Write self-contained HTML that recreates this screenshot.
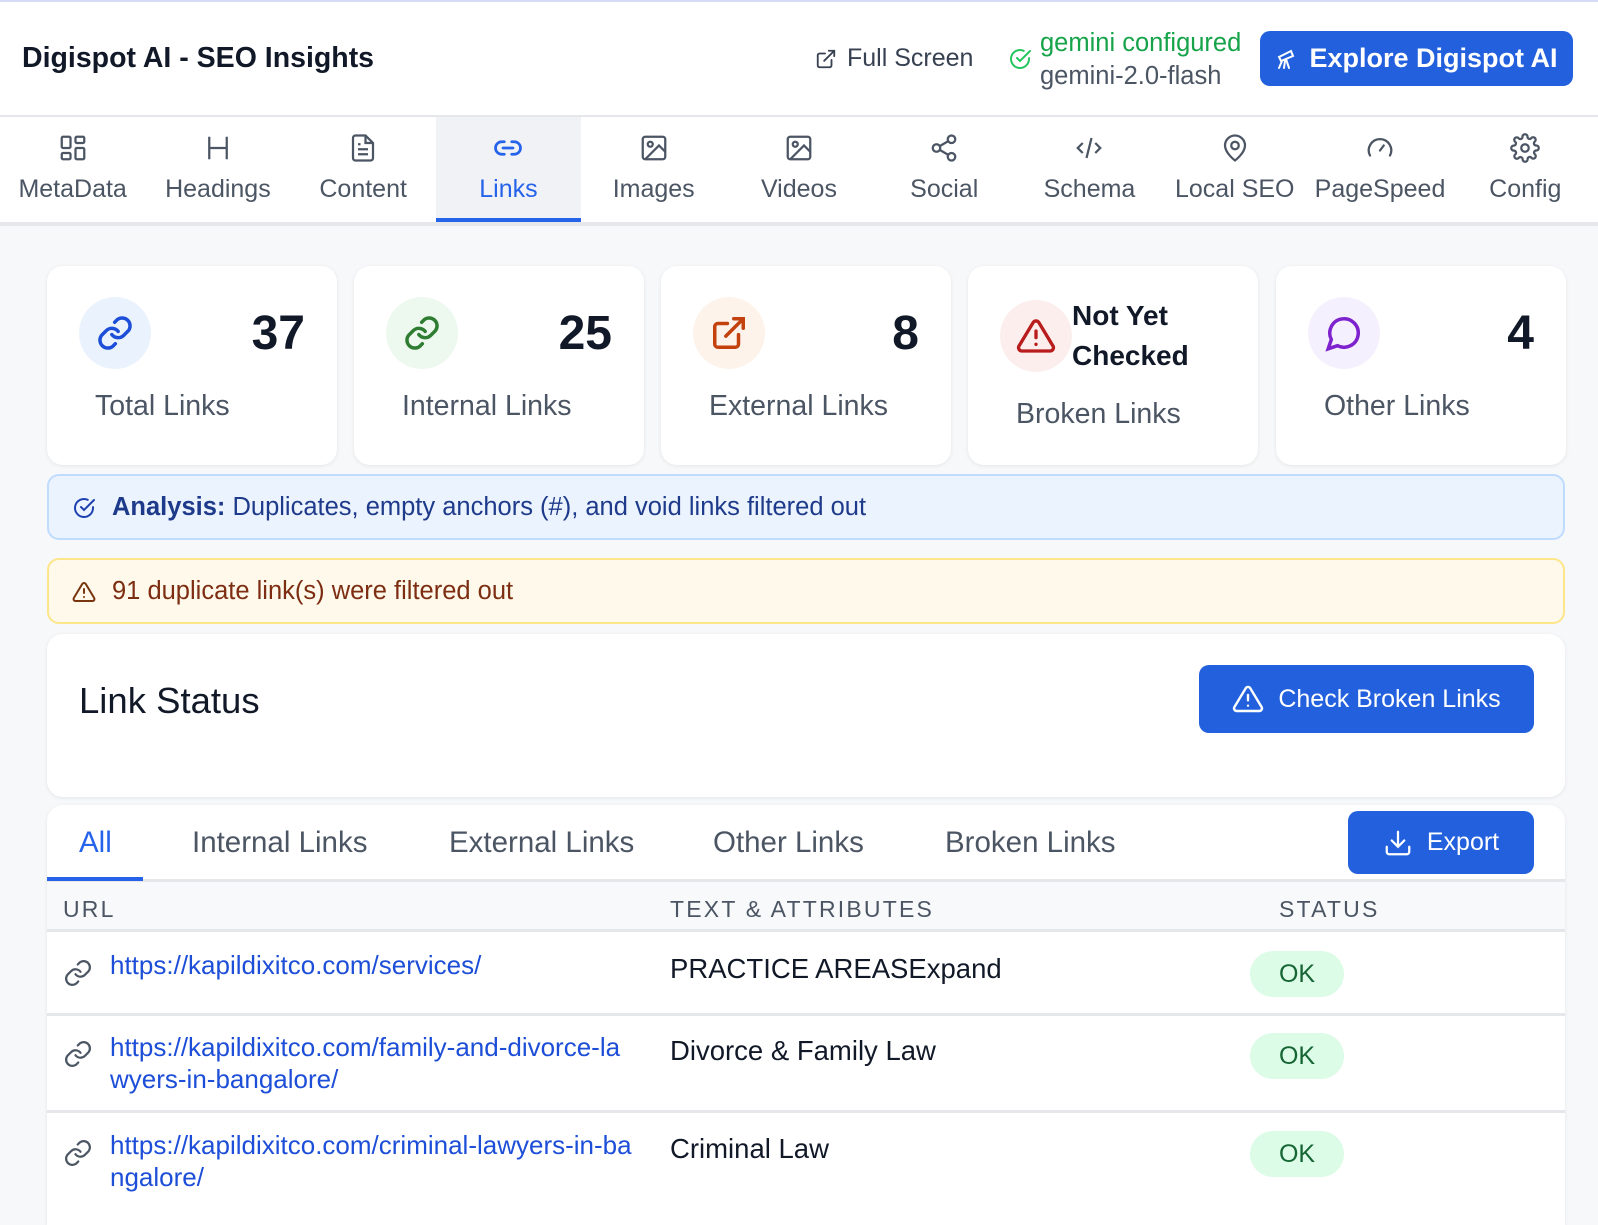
<!DOCTYPE html>
<html><head><meta charset="utf-8"><style>
*{box-sizing:border-box;margin:0;padding:0}
body{width:1598px;height:1198px;overflow:hidden;background:#f7f8fa;font-family:"Liberation Sans",sans-serif;color:#111827;position:relative}
.abs{position:absolute}
.hdr{left:0;top:0;width:1598px;height:117px;background:#fff;border-top:2px solid #d6dcf5;border-bottom:2px solid #e5e7eb}
.tabs{left:0;top:117px;width:1598px;height:109px;background:#fff;border-bottom:4px solid #e5e7eb;display:flex}
.tab{width:145.3px;height:105px;position:relative;text-align:center;color:#4b5563;font-size:25px}
.tab svg{position:absolute;left:50%;top:16px;margin-left:-15px}
.tab span{position:absolute;left:-10px;right:-10px;top:58px;white-space:nowrap}
.tab.act{background:#f1f2f5;color:#2563eb}
.tab.act:after{content:"";position:absolute;left:0;right:0;bottom:0;height:4px;background:#2563eb}
.card{background:#fff;border-radius:16px;box-shadow:0 1px 4px rgba(0,0,0,.08)}
.stat{top:266px;width:290px;height:199px}
.circ{position:absolute;left:32px;top:31px;width:72px;height:72px;border-radius:50%;display:flex;align-items:center;justify-content:center}
.num{position:absolute;right:32px;top:40px;font-size:48px;font-weight:bold}
.lbl{position:absolute;left:48px;top:124px;font-size:28.5px;color:#4b5563}
.btn{background:#2260dd;color:#fff;border-radius:10px;display:flex;align-items:center;justify-content:center;gap:14px}
.th{font-size:23px;color:#4b5563;letter-spacing:2.2px;top:896px}
.url{left:110px;width:650px;font-size:26px;color:#1d4ed8;line-height:32px;word-break:break-all}
.txt{left:670px;font-size:27.5px;color:#111827}
.ok{left:1250px;width:94px;height:46px;border-radius:23px;background:#dcfce7;color:#166534;font-size:25px;display:flex;align-items:center;justify-content:center}
.rowline{left:47px;width:1518px;height:3px;background:#e5e7eb}
.st{top:826px;font-size:29.5px;color:#4b5563}
</style></head><body>
<div class="abs hdr"></div>
<div class="abs" style="left:22px;top:42px;font-size:28.5px;font-weight:bold">Digispot AI - SEO Insights</div>
<svg class="abs" style="left:815px;top:48px" width="22" height="22" viewBox="0 0 24 24" fill="none" stroke="#374151" stroke-width="2" stroke-linecap="round"><path d="M18 13v6a2 2 0 0 1-2 2H5a2 2 0 0 1-2-2V8a2 2 0 0 1 2-2h6M15 3h6v6M10 14L21 3"/></svg>
<div class="abs" style="left:847px;top:44px;font-size:25px;color:#374151">Full Screen</div>
<svg class="abs" style="left:1008px;top:47px" width="24" height="24" viewBox="0 0 24 24" fill="none" stroke="#22c55e" stroke-width="2" stroke-linecap="round"><path d="M21 11.1V12a9 9 0 1 1-5.3-8.2"/><path d="M9 11l3 3L22 4"/></svg>
<div class="abs" style="left:1040px;top:29px;font-size:25.5px;color:#16a34a">gemini configured</div>
<div class="abs" style="left:1040px;top:62px;font-size:25.5px;color:#4b5563">gemini-2.0-flash</div>
<div class="abs btn" style="left:1260px;top:31px;width:313px;height:55px;font-size:27px;font-weight:bold;gap:10px">
<svg width="24" height="24" viewBox="0 0 24 24" fill="none" stroke="#fff" stroke-width="2" stroke-linecap="round"><path d="M4 10l12-6 2 5-12 5z M7 14l-3 7 M11 12l3 9 M10 14l-1 7"/></svg>Explore Digispot AI</div>

<div class="abs tabs">
<div class="tab"><svg width="30" height="30" viewBox="0 0 24 24" fill="none" stroke="#4b5563" stroke-width="1.8"><rect x="3" y="3" width="7" height="9" rx="1"/><rect x="14" y="3" width="7" height="5" rx="1"/><rect x="14" y="12" width="7" height="9" rx="1"/><rect x="3" y="16" width="7" height="5" rx="1"/></svg><span>MetaData</span></div>
<div class="tab"><svg width="30" height="30" viewBox="0 0 24 24" fill="none" stroke="#4b5563" stroke-width="1.8"><path d="M5 3v18M19 3v18M5 12h14"/></svg><span>Headings</span></div>
<div class="tab"><svg width="30" height="30" viewBox="0 0 24 24" fill="none" stroke="#4b5563" stroke-width="1.8"><path d="M14 2H6a2 2 0 0 0-2 2v16a2 2 0 0 0 2 2h12a2 2 0 0 0 2-2V8z M14 2v6h6 M8 13h8 M8 17h8 M8 9h2"/></svg><span>Content</span></div>
<div class="tab act"><svg width="30" height="30" viewBox="0 0 24 24" fill="none" stroke="#2563eb" stroke-width="2.2" stroke-linecap="round"><path d="M9 17H7a5 5 0 0 1 0-10h2M15 7h2a5 5 0 0 1 0 10h-2M8 12h8"/></svg><span>Links</span></div>
<div class="tab"><svg width="30" height="30" viewBox="0 0 24 24" fill="none" stroke="#4b5563" stroke-width="1.8"><rect x="3" y="3" width="18" height="18" rx="2"/><circle cx="9" cy="9" r="2"/><path d="M21 15l-5-5L5 21"/></svg><span>Images</span></div>
<div class="tab"><svg width="30" height="30" viewBox="0 0 24 24" fill="none" stroke="#4b5563" stroke-width="1.8"><rect x="3" y="3" width="18" height="18" rx="2"/><circle cx="9" cy="9" r="2"/><path d="M21 15l-5-5L5 21"/></svg><span>Videos</span></div>
<div class="tab"><svg width="30" height="30" viewBox="0 0 24 24" fill="none" stroke="#4b5563" stroke-width="1.8"><circle cx="18" cy="5" r="3"/><circle cx="6" cy="12" r="3"/><circle cx="18" cy="19" r="3"/><path d="M8.6 13.5l6.8 4M15.4 6.5l-6.8 4"/></svg><span>Social</span></div>
<div class="tab"><svg width="30" height="30" viewBox="0 0 24 24" fill="none" stroke="#4b5563" stroke-width="1.8"><path d="M7 8l-4 4 4 4M17 8l4 4-4 4M14 4l-4 16"/></svg><span>Schema</span></div>
<div class="tab"><svg width="30" height="30" viewBox="0 0 24 24" fill="none" stroke="#4b5563" stroke-width="1.8"><path d="M20 10c0 6-8 12-8 12s-8-6-8-12a8 8 0 0 1 16 0z"/><circle cx="12" cy="10" r="3"/></svg><span>Local SEO</span></div>
<div class="tab"><svg width="30" height="30" viewBox="0 0 24 24" fill="none" stroke="#4b5563" stroke-width="1.8" stroke-linecap="round"><path d="M4 18a9 9 0 1 1 16 0M12 14l3-4"/></svg><span>PageSpeed</span></div>
<div class="tab"><svg width="30" height="30" viewBox="0 0 24 24" fill="none" stroke="#4b5563" stroke-width="1.8"><circle cx="12" cy="12" r="3"/><path d="M19.4 15a1.7 1.7 0 0 0 .3 1.8l.1.1a2 2 0 1 1-2.8 2.8l-.1-.1a1.7 1.7 0 0 0-1.8-.3 1.7 1.7 0 0 0-1 1.5V21a2 2 0 1 1-4 0v-.1a1.7 1.7 0 0 0-1.1-1.5 1.7 1.7 0 0 0-1.8.3l-.1.1a2 2 0 1 1-2.8-2.8l.1-.1a1.7 1.7 0 0 0 .3-1.8 1.7 1.7 0 0 0-1.5-1H3a2 2 0 1 1 0-4h.1a1.7 1.7 0 0 0 1.5-1.1 1.7 1.7 0 0 0-.3-1.8l-.1-.1a2 2 0 1 1 2.8-2.8l.1.1a1.7 1.7 0 0 0 1.8.3H9a1.7 1.7 0 0 0 1-1.5V3a2 2 0 1 1 4 0v.1a1.7 1.7 0 0 0 1 1.5 1.7 1.7 0 0 0 1.8-.3l.1-.1a2 2 0 1 1 2.8 2.8l-.1.1a1.7 1.7 0 0 0-.3 1.8V9a1.7 1.7 0 0 0 1.5 1H21a2 2 0 1 1 0 4h-.1a1.7 1.7 0 0 0-1.5 1z"/></svg><span>Config</span></div>
</div>

<div class="abs card stat" style="left:47px"><div class="circ" style="background:#eaf2fe"><svg width="38" height="38" viewBox="0 0 24 24" fill="none" stroke="#1d4ed8" stroke-width="2.2" stroke-linecap="round"><path d="M10 13a5 5 0 0 0 7.5.5l3-3a5 5 0 0 0-7-7l-1.7 1.7M14 11a5 5 0 0 0-7.5-.5l-3 3a5 5 0 0 0 7 7l1.7-1.7"/></svg></div><div class="num">37</div><div class="lbl">Total Links</div></div>
<div class="abs card stat" style="left:354px"><div class="circ" style="background:#edf8ef"><svg width="38" height="38" viewBox="0 0 24 24" fill="none" stroke="#2e7d32" stroke-width="2.2" stroke-linecap="round"><path d="M10 13a5 5 0 0 0 7.5.5l3-3a5 5 0 0 0-7-7l-1.7 1.7M14 11a5 5 0 0 0-7.5-.5l-3 3a5 5 0 0 0 7 7l1.7-1.7"/></svg></div><div class="num">25</div><div class="lbl">Internal Links</div></div>
<div class="abs card stat" style="left:661px"><div class="circ" style="background:#fdf3ea"><svg width="38" height="38" viewBox="0 0 24 24" fill="none" stroke="#c2410c" stroke-width="2.2" stroke-linecap="round"><path d="M18 13v6a2 2 0 0 1-2 2H5a2 2 0 0 1-2-2V8a2 2 0 0 1 2-2h6M15 3h6v6M10 14L21 3"/></svg></div><div class="num">8</div><div class="lbl">External Links</div></div>
<div class="abs card stat" style="left:968px"><div class="circ" style="background:#fdeeee;top:34px"><svg width="40" height="40" viewBox="0 0 24 24" fill="none" stroke="#b91c1c" stroke-width="2" stroke-linecap="round"><path d="M10.3 3.9L1.8 18a2 2 0 0 0 1.7 3h17a2 2 0 0 0 1.7-3L13.7 3.9a2 2 0 0 0-3.4 0zM12 9v4M12 17h.01"/></svg></div><div style="position:absolute;left:104px;top:30px;font-size:28px;font-weight:bold;line-height:40px">Not Yet<br>Checked</div><div class="lbl" style="top:132px">Broken Links</div></div>
<div class="abs card stat" style="left:1276px"><div class="circ" style="background:#f5f0fd"><svg width="38" height="38" viewBox="0 0 24 24" fill="none" stroke="#7e22ce" stroke-width="2.2" stroke-linecap="round"><path d="M7.9 20A9 9 0 1 0 4 16.1L2 22z"/></svg></div><div class="num">4</div><div class="lbl">Other Links</div></div>

<div class="abs" style="left:47px;top:474px;width:1518px;height:66px;background:#ebf3fe;border:2px solid #bfdbfe;border-radius:12px"></div>
<svg class="abs" style="left:72px;top:496px" width="24" height="24" viewBox="0 0 24 24" fill="none" stroke="#1e40af" stroke-width="2" stroke-linecap="round"><path d="M21 11.1V12a9 9 0 1 1-5.3-8.2"/><path d="M9 11l3 3L22 4"/></svg>
<div class="abs" style="left:112px;top:493px;font-size:25.5px;color:#1e3a8a"><b>Analysis:</b> Duplicates, empty anchors (#), and void links filtered out</div>

<div class="abs" style="left:47px;top:558px;width:1518px;height:66px;background:#fef9eb;border:2px solid #fde68a;border-radius:12px"></div>
<svg class="abs" style="left:72px;top:580px" width="24" height="24" viewBox="0 0 24 24" fill="none" stroke="#78350f" stroke-width="2" stroke-linecap="round"><path d="M10.3 3.9L1.8 18a2 2 0 0 0 1.7 3h17a2 2 0 0 0 1.7-3L13.7 3.9a2 2 0 0 0-3.4 0zM12 9v4M12 17h.01"/></svg>
<div class="abs" style="left:112px;top:577px;font-size:25.5px;color:#7c2d12">91 duplicate link(s) were filtered out</div>

<div class="abs card" style="left:47px;top:634px;width:1518px;height:163px"></div>
<div class="abs" style="left:79px;top:680px;font-size:36.5px;color:#111827">Link Status</div>
<div class="abs btn" style="left:1199px;top:665px;width:335px;height:68px;font-size:25px"><svg width="32" height="32" viewBox="0 0 24 24" fill="none" stroke="#fff" stroke-width="1.8" stroke-linecap="round"><path d="M10.3 3.9L1.8 18a2 2 0 0 0 1.7 3h17a2 2 0 0 0 1.7-3L13.7 3.9a2 2 0 0 0-3.4 0zM12 9v4M12 17h.01"/></svg>Check Broken Links</div>

<div class="abs card" style="left:47px;top:805px;width:1518px;height:420px;border-radius:16px 16px 0 0"></div>
<div class="abs st" style="left:79px;color:#2563eb">All</div>
<div class="abs st" style="left:192px">Internal Links</div>
<div class="abs st" style="left:449px">External Links</div>
<div class="abs st" style="left:713px">Other Links</div>
<div class="abs st" style="left:945px">Broken Links</div>
<div class="abs btn" style="left:1348px;top:811px;width:186px;height:63px;font-size:25px"><svg width="30" height="30" viewBox="0 0 24 24" fill="none" stroke="#fff" stroke-width="1.8" stroke-linecap="round"><path d="M21 15v4a2 2 0 0 1-2 2H5a2 2 0 0 1-2-2v-4M7 10l5 5 5-5M12 15V3"/></svg>Export</div>
<div class="abs" style="left:47px;top:879px;width:1518px;height:53px;background:#f8f9fb;border-top:3px solid #e5e7eb;border-bottom:3px solid #e5e7eb"></div>
<div class="abs" style="left:47px;top:877px;width:96px;height:4px;background:#2563eb"></div>
<div class="abs th" style="left:63px">URL</div>
<div class="abs th" style="left:670px">TEXT &amp; ATTRIBUTES</div>
<div class="abs th" style="left:1279px">STATUS</div>

<svg class="abs" style="left:63px;top:958px" width="30" height="30" viewBox="0 0 24 24" fill="none" stroke="#4b5563" stroke-width="1.8" stroke-linecap="round"><path d="M10 13a5 5 0 0 0 7.5.5l3-3a5 5 0 0 0-7-7l-1.7 1.7M14 11a5 5 0 0 0-7.5-.5l-3 3a5 5 0 0 0 7 7l1.7-1.7"/></svg>
<div class="abs url" style="top:949px">https://kapildixitco.com/services/</div>
<div class="abs txt" style="top:953px">PRACTICE AREASExpand</div>
<div class="abs ok" style="top:951px">OK</div>
<div class="abs rowline" style="top:1013px"></div>

<svg class="abs" style="left:63px;top:1039px" width="30" height="30" viewBox="0 0 24 24" fill="none" stroke="#4b5563" stroke-width="1.8" stroke-linecap="round"><path d="M10 13a5 5 0 0 0 7.5.5l3-3a5 5 0 0 0-7-7l-1.7 1.7M14 11a5 5 0 0 0-7.5-.5l-3 3a5 5 0 0 0 7 7l1.7-1.7"/></svg>
<div class="abs url" style="top:1031px">https://kapildixitco.com/family-and-divorce-la<br>wyers-in-bangalore/</div>
<div class="abs txt" style="top:1035px">Divorce &amp; Family Law</div>
<div class="abs ok" style="top:1033px">OK</div>
<div class="abs rowline" style="top:1110px"></div>

<svg class="abs" style="left:63px;top:1138px" width="30" height="30" viewBox="0 0 24 24" fill="none" stroke="#4b5563" stroke-width="1.8" stroke-linecap="round"><path d="M10 13a5 5 0 0 0 7.5.5l3-3a5 5 0 0 0-7-7l-1.7 1.7M14 11a5 5 0 0 0-7.5-.5l-3 3a5 5 0 0 0 7 7l1.7-1.7"/></svg>
<div class="abs url" style="top:1129px">https://kapildixitco.com/criminal-lawyers-in-ba<br>ngalore/</div>
<div class="abs txt" style="top:1133px">Criminal Law</div>
<div class="abs ok" style="top:1131px">OK</div>
</body></html>
